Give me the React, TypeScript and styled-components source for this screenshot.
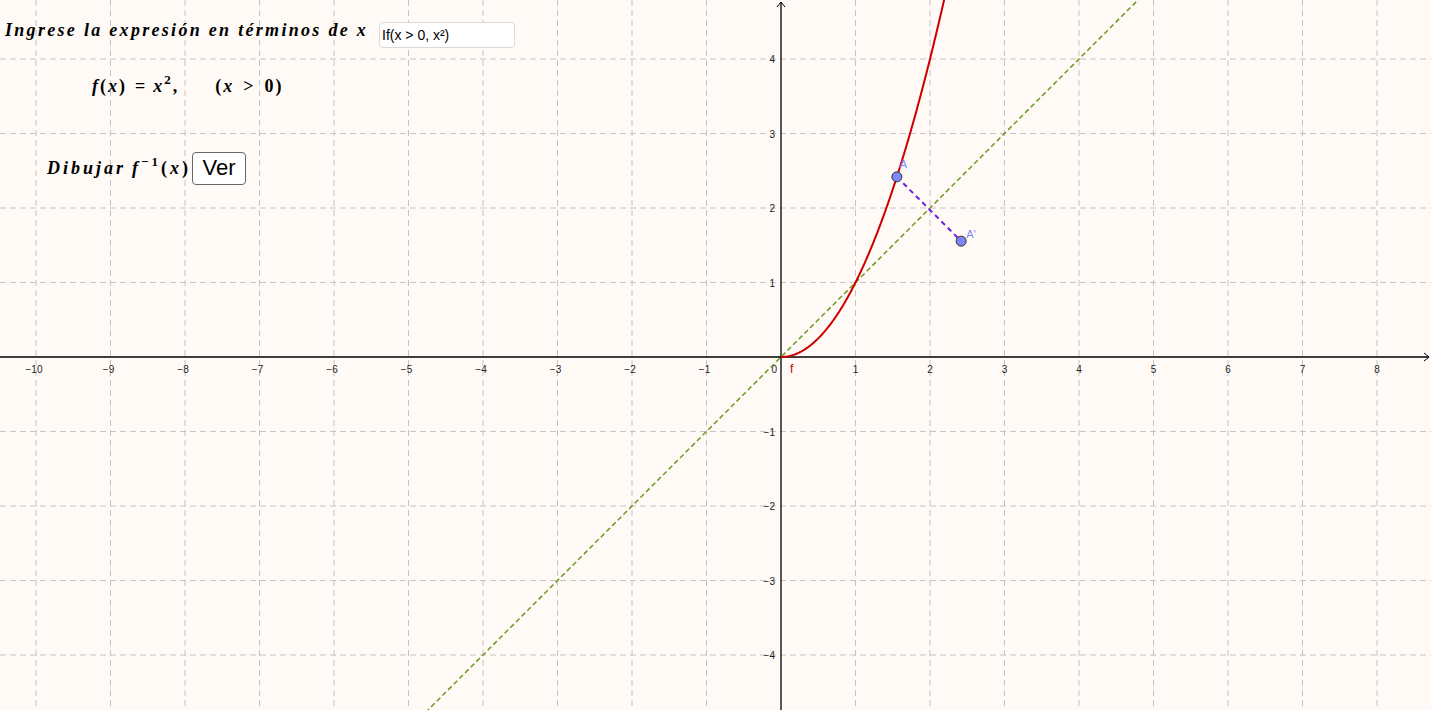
import styled, { createGlobalStyle } from 'styled-components'

const W = 1431
const H = 710
const S = 74.5
const OX = 781
const OY = 357

const px = (x: number) => OX + x * S
const py = (y: number) => OY - y * S

const GlobalStyle = createGlobalStyle`
  html, body {
    margin: 0;
    padding: 0;
    overflow: hidden;
    background: #fffaf6;
  }
`

const Canvas = styled.div`
  position: relative;
  width: ${W}px;
  height: ${H}px;
  background: #fffaf6;
  overflow: hidden;
  font-family: "Liberation Sans", Arial, sans-serif;
`

const Graph = styled.svg`
  display: block;
`

const MathText = styled.div<{ $top: number; $left: number; $spacing?: number }>`
  position: absolute;
  top: ${p => p.$top}px;
  left: ${p => p.$left}px;
  font-family: "Liberation Serif", "Times New Roman", serif;
  font-style: italic;
  font-weight: bold;
  font-size: 18px;
  letter-spacing: ${p => p.$spacing ?? 0}px;
  color: #000;
  white-space: nowrap;
  display: flex;
  align-items: center;

  .up {
    font-style: normal;
  }

  sup {
    font-size: 13px;
    position: relative;
    top: -7px;
  }
`

const Gap = styled.span<{ $w: number }>`
  display: inline-block;
  width: ${p => p.$w}px;
`

const InputBox = styled.div`
  position: absolute;
  top: 22px;
  left: 379px;
  width: 136px;
  height: 26px;
  box-sizing: border-box;
  border: 1px solid #d9d9d9;
  border-radius: 4px;
  background: #fff;
  padding-left: 2px;
  font-size: 14px;
  line-height: 25px;
  color: #000;
`

const Button = styled.div`
  position: absolute;
  top: 152px;
  left: 192px;
  width: 54px;
  height: 33px;
  box-sizing: border-box;
  border: 1px solid #666;
  border-radius: 4px;
  background: #fff;
  font-size: 22px;
  line-height: 30px;
  text-align: center;
  color: #000;
`

function Grid () {
  const lines = []
  for (let k = -11; k <= 9; k++) {
    if (k === 0) continue
    lines.push(<line key={'v' + k} x1={px(k)} y1={0} x2={px(k)} y2={H} />)
  }
  for (let k = -5; k <= 5; k++) {
    if (k === 0) continue
    lines.push(<line key={'h' + k} x1={0} y1={py(k)} x2={W} y2={py(k)} />)
  }
  return (
    <g stroke='#c4c4c4' strokeWidth={1} strokeDasharray='6 4'>
      {lines}
    </g>
  )
}

function TickLabels () {
  const xs = []
  for (let k = -10; k <= 8; k++) {
    if (k === 0) continue
    xs.push(
      <text key={'x' + k} x={px(k) + (k < 0 ? -2 : 0)} y={OY + 16} textAnchor='middle'>
        {k < 0 ? '\u2212' + -k : k}
      </text>
    )
  }
  const ys = []
  for (let k = -4; k <= 4; k++) {
    if (k === 0) continue
    ys.push(
      <text key={'y' + k} x={OX - 6} y={py(k) + 4} textAnchor='end'>
        {k < 0 ? '\u2212' + -k : k}
      </text>
    )
  }
  return (
    <g fontFamily='"Liberation Sans", Arial, sans-serif' fontSize={10} fill='#222'>
      {xs}
      {ys}
      <text x={OX - 4} y={OY + 16} textAnchor='end'>0</text>
    </g>
  )
}

function curvePath () {
  const pts: string[] = []
  for (let x = 0; x <= 2.25; x += 0.01) {
    pts.push(`${px(x).toFixed(2)},${py(x * x).toFixed(2)}`)
  }
  return 'M' + pts.join(' L')
}

export default function App () {
  const a = 1.555
  const ax = px(a)
  const ay = py(a * a)
  const bx = px(a * a)
  const by = py(a)

  return (
    <>
      <GlobalStyle />
      <Canvas>
        <Graph width={W} height={H} viewBox={`0 0 ${W} ${H}`}>
          <Grid />
          {/* axes */}
          <g stroke='#000' strokeWidth={1.3} fill='none'>
            <line x1={0} y1={OY} x2={W - 2} y2={OY} />
            <line x1={OX} y1={H} x2={OX} y2={2} />
            <polyline points={`${W - 7},${OY - 4} ${W - 2},${OY} ${W - 7},${OY + 4}`} strokeWidth={1} />
            <polyline points={`${OX - 4},${7} ${OX},${2} ${OX + 4},${7}`} strokeWidth={1} />
          </g>
          <TickLabels />
          {/* y = x */}
          <line
            x1={px(-5)} y1={py(-5)} x2={px(5)} y2={py(5)}
            stroke='#6b9a1f' strokeWidth={1.5} strokeDasharray='5 3'
          />
          {/* f */}
          <path d={curvePath()} stroke='#cc0000' strokeWidth={2} fill='none' />
          <text x={OX + 9} y={OY + 16} fontSize={12} fill='#cc0000' fontFamily='"Liberation Sans", Arial, sans-serif'>f</text>
          {/* A to A' */}
          <line x1={ax} y1={ay} x2={bx} y2={by} stroke='#6a1fe6' strokeWidth={2} strokeDasharray='5 4' />
          <circle cx={ax} cy={ay} r={5} fill='#7f86f5' stroke='#333' strokeWidth={1} />
          <circle cx={bx} cy={by} r={5} fill='#7f86f5' stroke='#333' strokeWidth={1} />
          <g fontFamily='"Liberation Sans", Arial, sans-serif' fontSize={11} fill='#8086f0'>
            <text x={ax + 3} y={ay - 9}>A</text>
            <text x={bx + 5} y={by - 3}>A'</text>
          </g>
        </Graph>

        <MathText $top={20} $left={5} $spacing={2.3}>
          Ingrese la expresión en términos de x
        </MathText>
        <InputBox>If(x &gt; 0, x²)</InputBox>

        <MathText $top={76} $left={92} $spacing={2}>
          f<span className='up'>(</span>x<span className='up'>)</span>
          <Gap $w={8} /><span className='up'>=</span><Gap $w={6} />
          x<sup className='up'>2</sup><span className='up'>,</span>
          <Gap $w={36} />
          <span className='up'>(</span>x<Gap $w={9} /><span className='up'>&gt;</span><Gap $w={9} /><span className='up'>0)</span>
        </MathText>

        <MathText $top={158} $left={47} $spacing={3}>
          Dibujar<Gap $w={6} />f<sup className='up'>−1</sup><span className='up'>(</span>x<span className='up'>)</span>
        </MathText>
        <Button>Ver</Button>
      </Canvas>
    </>
  )
}
